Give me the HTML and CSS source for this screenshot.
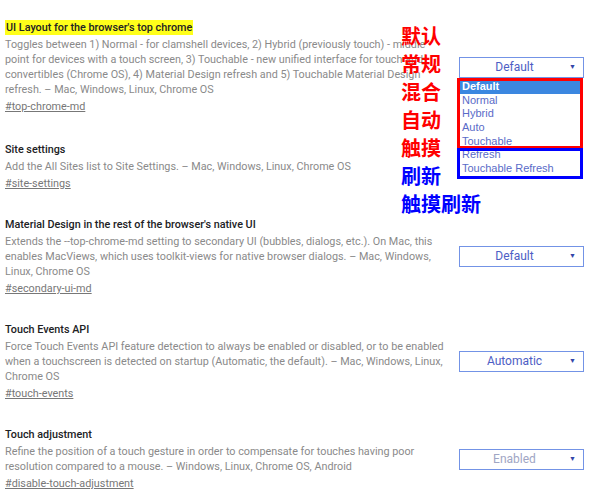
FILE: index.html
```html
<!DOCTYPE html>
<html lang="en">
<head>
    <meta charset="UTF-8">
    <meta name="viewport" content="width=device-width, initial-scale=1.0">
    <title>Experiments</title>
    <link rel="stylesheet" href="styles.css">
</head>
<body>
    <div class="container">
        <div class="experiment">
            <div class="info">
                <h3 class="name"><span class="mark">UI Layout for the browser's top chrome</span></h3>
                <p class="desc">Toggles between 1) Normal - for clamshell devices, 2) Hybrid (previously touch) - middle<br>point for devices with a touch screen, 3) Touchable - new unified interface for touch and<br>convertibles (Chrome OS), 4) Material Design refresh and 5) Touchable Material Design<br>refresh. – Mac, Windows, Linux, Chrome OS</p>
                <a class="permalink" href="#top-chrome-md">#top-chrome-md</a>
            </div>
            <div class="select">Default<span class="arrow">▼</span></div>
        </div>

        <div class="experiment">
            <div class="info">
                <h3 class="name">Site settings</h3>
                <p class="desc">Add the All Sites list to Site Settings. – Mac, Windows, Linux, Chrome OS</p>
                <a class="permalink" href="#site-settings">#site-settings</a>
            </div>
        </div>

        <div class="experiment">
            <div class="info">
                <h3 class="name">Material Design in the rest of the browser's native UI</h3>
                <p class="desc">Extends the --top-chrome-md setting to secondary UI (bubbles, dialogs, etc.). On Mac, this<br>enables MacViews, which uses toolkit-views for native browser dialogs. – Mac, Windows,<br>Linux, Chrome OS</p>
                <a class="permalink" href="#secondary-ui-md">#secondary-ui-md</a>
            </div>
            <div class="select">Default<span class="arrow">▼</span></div>
        </div>

        <div class="experiment">
            <div class="info">
                <h3 class="name">Touch Events API</h3>
                <p class="desc">Force Touch Events API feature detection to always be enabled or disabled, or to be enabled<br>when a touchscreen is detected on startup (Automatic, the default). – Mac, Windows, Linux,<br>Chrome OS</p>
                <a class="permalink" href="#touch-events">#touch-events</a>
            </div>
            <div class="select">Automatic<span class="arrow">▼</span></div>
        </div>

        <div class="experiment">
            <div class="info">
                <h3 class="name">Touch adjustment</h3>
                <p class="desc">Refine the position of a touch gesture in order to compensate for touches having poor<br>resolution compared to a mouse. – Windows, Linux, Chrome OS, Android</p>
                <a class="permalink" href="#disable-touch-adjustment">#disable-touch-adjustment</a>
            </div>
            <div class="select faded">Enabled<span class="arrow">▼</span></div>
        </div>
    </div>

    <!-- открытый список первого селекта -->
    <ul class="dropdown">
        <li class="selected">Default</li>
        <li>Normal</li>
        <li>Hybrid</li>
        <li>Auto</li>
        <li>Touchable</li>
        <li>Refresh</li>
        <li>Touchable Refresh</li>
    </ul>
    <div class="box box-red"></div>
    <div class="box box-blue"></div>

    <div class="labels">
        <div class="red">默认</div>
        <div class="red">常规</div>
        <div class="red">混合</div>
        <div class="red">自动</div>
        <div class="red">触摸</div>
        <div class="blue">刷新</div>
        <div class="blue">触摸刷新</div>
    </div>
</body>
</html>
```

FILE: styles.css
```css
body {
    font-family: Roboto, "Liberation Sans", Arial, sans-serif;
    background: white;
    margin: 0;
    overflow: hidden;
}
.container {
    padding: 20px 14px 0 5px;
}
.experiment {
    display: flex;
    align-items: center;
    justify-content: space-between;
    margin-bottom: 26px;
}
.experiment:first-child {
    margin-bottom: 28px;
}
.info {
    width: 445px;
}
.name {
    margin: 0 0 2px;
    font-size: 10.8px;
    font-weight: 500;
    line-height: 15px;
    color: #202124;
}
.mark {
    background: #ffff1a;
    padding: 1px 1px;
}
.desc {
    margin: 0;
    font-size: 10.8px;
    line-height: 15px;
    color: #8a8a8a;
    white-space: nowrap;
}
.permalink {
    display: block;
    margin-top: 2px;
    font-size: 10.8px;
    line-height: 15px;
    color: #777;
}
.select {
    position: relative;
    width: 123px;
    height: 19px;
    border: 1px solid #7393e6;
    font-size: 12px;
    line-height: 19px;
    color: #4d5ec4;
    text-align: center;
    text-indent: -14px;
}
.select.faded {
    color: #a0a6c4;
}
.arrow {
    position: absolute;
    right: 7px;
    top: 0;
    font-size: 7px;
    color: #3345a8;
    text-indent: 0;
}
.dropdown {
    position: absolute;
    left: 459px;
    top: 80px;
    width: 123px;
    margin: 0;
    padding: 0;
    list-style: none;
    background: white;
    font-family: "Liberation Sans", Arial, sans-serif;
    font-size: 11px;
}
.dropdown li {
    height: 13.7px;
    line-height: 13.7px;
    padding-left: 3px;
    color: #5a6bc8;
}
.dropdown li.selected {
    background: #3b87e0;
    color: white;
    font-weight: bold;
}
.box {
    position: absolute;
    left: 457px;
    width: 120px;
    border: 3px solid;
}
.box-red {
    top: 78px;
    height: 65px;
    border-color: #ff0000;
}
.box-blue {
    top: 148px;
    height: 25px;
    border-color: #0000ff;
}
.labels {
    position: absolute;
    left: 401px;
    top: 22px;
    font-family: "Noto Sans CJK SC", sans-serif;
    font-size: 20px;
    font-weight: bold;
    line-height: 28px;
}
.red {
    color: #ff0000;
}
.blue {
    color: #0000ff;
}
```
